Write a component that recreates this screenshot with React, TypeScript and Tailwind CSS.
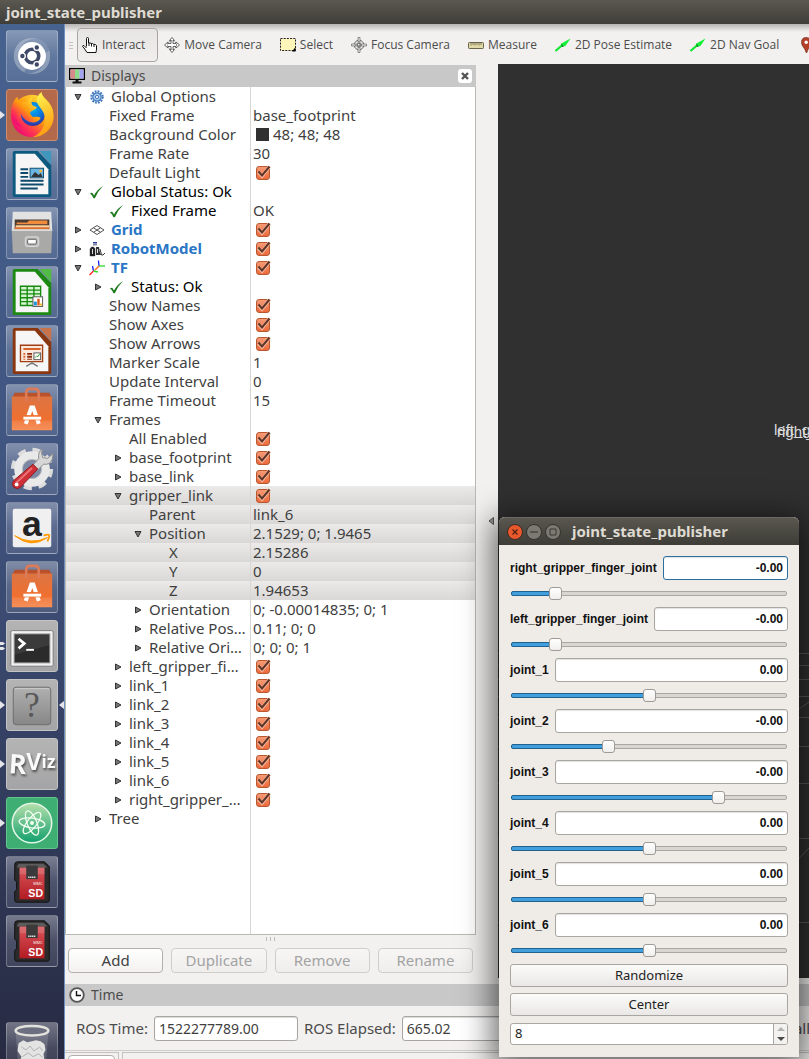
import { useState, type ReactNode } from "react";

/* ---------- launcher icons ---------- */

const UbuntuIcon = () => (
  <svg viewBox="0 0 52 52" className="size-full">
    <circle cx="26" cy="26" r="19" fill="#fff" opacity="0.1" />
    <path d="M8 32C4 16 16 5 30 8c-12 0-18 8-17 20zM44 20c4 16-8 27-22 24 12 0 18-8 17-20zM18 43C4 36 4 20 15 11c-7 10-4 20 6 25z" fill="#fff" opacity="0.22" />
    <circle cx="26" cy="26" r="14.500" fill="#fff" />
    <circle cx="26" cy="26" r="7" fill="none" stroke="#3f4968" strokeWidth="3.800" />
    <g stroke="#fff" strokeWidth="1.400" fill="#3f4968">
      <circle cx="16" cy="26" r="3" />
      <circle cx="31" cy="17.200" r="3" />
      <circle cx="31" cy="34.800" r="3" />
    </g>
  </svg>
);

const FirefoxIcon = () => (
  <svg viewBox="0 0 52 52" className="size-full">
    <defs>
      <linearGradient id="fxBody" x1="0.85" y1="0.1" x2="0.15" y2="0.9">
        <stop offset="0" stopColor="#ffe53b" />
        <stop offset="0.45" stopColor="#ff980e" />
        <stop offset="0.75" stopColor="#ff3750" />
        <stop offset="1" stopColor="#eb0878" />
      </linearGradient>
      <radialGradient id="fxBlue" cx="0.5" cy="0.3" r="0.7">
        <stop offset="0" stopColor="#00b3f4" />
        <stop offset="0.6" stopColor="#0a6fd8" />
        <stop offset="1" stopColor="#3a2f9b" />
      </radialGradient>
      <linearGradient id="fxTail" x1="0.3" y1="0" x2="0.6" y2="1">
        <stop offset="0" stopColor="#fff44f" />
        <stop offset="1" stopColor="#ff980e" />
      </linearGradient>
    </defs>
    <circle cx="26" cy="27" r="22" fill="url(#fxBody)" />
    <circle cx="27" cy="25" r="12.500" fill="url(#fxBlue)" />
    <path d="M4.500 26C3.500 16 8 9 11 7c0 3 1 5 3 6 3-1 5-1 7 0 0-2 3-5 6-6-2 3-2 5-1 8 1 2 4 2 5 3-1 3-6 3-7 6 0 2 2 3 3 4 3 0 5-1 8 1-2 4-7 6-12 4C16 31 12 22 14 17 8 22 9 32 16 39 9 37 5 32 4.500 26z" fill="url(#fxBody)" />
    <path d="M36 2c0 7 13 10 12.500 26C48 40 38 49 27 49c9-4 14-13 12-22-1-7-9-11-8-17 .5-3 2-6 5-8z" fill="url(#fxTail)" />
  </svg>
);

const DocumentShell = ({ main, fold, children }: { main: string; fold: string; children: ReactNode }) => (
  <svg viewBox="0 0 52 52" className="size-full">
    <path d="M8 2h24l14 15v31a2 2 0 0 1-2 2H8a2 2 0 0 1-2-2V4a2 2 0 0 1 2-2z" fill={main} />
    <path d="M34 2h12v14z" fill={fold} />
    <path d="M9 5h20l14 16v26H9z" fill="#f6f6f6" />
    {children}
  </svg>
);

const WriterIcon = () => (
  <DocumentShell main="#0d5a80" fold="#3f97bd">
    <g fill="#0d4a6c">
      <path d="M14 20h8v2h-8zM14 24h8v2h-8zM14 28h8v2h-8zM14 32h24v2H14zM14 36h24v2H14zM14 40h18v2H14z" />
    </g>
    <rect x="24" y="20" width="14" height="10" fill="#6ab6e2" stroke="#0d4a6c" />
    <path d="M25 29l4-5 4 3 2-2 2 4z" fill="#333" />
    <circle cx="35" cy="23" r="1.500" fill="#ffb52e" />
  </DocumentShell>
);

const CalcIcon = () => (
  <DocumentShell main="#1c8a12" fold="#51bb46">
    <path d="M14 20h21v20H14zM14 24h21M14 28h21M14 32h21M14 36h21M21 20v20M28 20v20" fill="#d8f5d3" stroke="#158a0c" strokeWidth="1.400" />
    <rect x="27" y="31" width="10" height="10" fill="#fff" stroke="#555" />
    <path d="M28 36h3v4h-3z" fill="#1893d8" />
    <path d="M31.500 33h2.500v7h-2.500z" fill="#e0571b" />
    <path d="M34 38h2.500v2H34z" fill="#f5c021" />
  </DocumentShell>
);

const ImpressIcon = () => (
  <DocumentShell main="#8a3710" fold="#c8734a">
    <path d="M14 20h23v17H14z" fill="#fbe9df" stroke="#a23f12" strokeWidth="1.400" />
    <path d="M17 23h18v2H17zM17 28h2v2h-2zM17 31h2v2h-2zM17 34h2v1h-2z" fill="#d9642a" />
    <path d="M21 28h5v2h-5zM21 31h5v2h-5zM21 34h5v1h-5z" fill="#8a2b0a" />
    <rect x="28" y="28" width="7" height="7" fill="#fff" stroke="#555" />
    <path d="M29 33l2-2 1 1 2-3" stroke="#2a9b2a" fill="none" />
    <path d="M26 37v2M20 42l5-3h2l5 3" stroke="#777" strokeWidth="1.500" fill="none" />
  </DocumentShell>
);

const FilesIcon = () => (
  <svg viewBox="0 0 52 52" className="size-full">
    <path d="M6 4h40l1 19H5z" fill="#e2e2e2" />
    <path d="M8 12h36v12H8z" fill="#4a3a32" />
    <path d="M10 15h11l2-2h19v4H10z" fill="#ef8c3e" />
    <path d="M9 18h35v4H9z" fill="#f7cf9d" />
    <path d="M8 20h36v3H8z" fill="#e06d2e" />
    <path d="M5 22h42l-1 25H6z" fill="#a9a9a7" />
    <path d="M5 22h42v2H5z" fill="#dcdcdc" />
    <rect x="19" y="30" width="14" height="10" rx="2" fill="#bdbdbd" stroke="#dedede" />
    <rect x="21.500" y="32.500" width="9" height="5" rx="1" fill="#fff" stroke="#555" />
  </svg>
);

const SoftwareIcon = () => (
  <svg viewBox="0 0 52 52" className="size-full">
    <defs>
      <linearGradient id="bag" x1="0" y1="0" x2="0" y2="1">
        <stop offset="0" stopColor="#dc7443" />
        <stop offset="0.700" stopColor="#f07030" />
        <stop offset="1" stopColor="#f58347" />
      </linearGradient>
    </defs>
    <path d="M8 8h36l3 6H5z" fill="#b9512b" />
    <path d="M5 12h42v35H5z" fill="url(#bag)" />
    <path d="M5 37h42v10H5z" fill="#fff" opacity="0.1" />
    <path d="M20 17V8q0-4 4-4h5q4 0 4 4v9" fill="none" stroke="#dd7a58" strokeWidth="2.800" />
    <path d="M19.500 40.500L25.300 23.500h2l5.800 17" stroke="#fff" strokeWidth="4.200" fill="none" />
    <path d="M16 34h21" stroke="#f07030" strokeWidth="5.400" />
    <path d="M17 34.500h18.500" stroke="#fff" strokeWidth="3" />
  </svg>
);

const SettingsIcon = () => (
  <svg viewBox="0 0 52 52" className="size-full">
    <circle cx="26" cy="26" r="19.500" fill="none" stroke="#dcdcdc" strokeWidth="5" strokeDasharray="8.300 7" />
    <circle cx="26" cy="26" r="14" fill="none" stroke="#e9e9e9" strokeWidth="9" />
    <circle cx="26" cy="26" r="10" fill="#7b87a3" stroke="#bbb" />
    <path d="M37 5q-5 3-4 10L26 23l5 5 7-7q7 1 9-5l1-6-6 5-5-1-1-5z" fill="#d6d6d6" stroke="#8a8a8a" />
    <path d="M27 21l5 5-18 19q-3 3-7 0-3-4 0-7z" fill="#cf2f36" stroke="#8c1a20" />
    <path d="M26 25L10 40" stroke="#ea7378" strokeWidth="2" />
    <circle cx="10" cy="42" r="2" fill="#fff" />
  </svg>
);

const AmazonIcon = () => (
  <svg viewBox="0 0 52 52" className="size-full">
    <rect x="6" y="6" width="40" height="40" rx="2" fill="#f0f0f0" />
    <text x="26" y="34" textAnchor="middle" fontFamily="Liberation Sans, sans-serif" fontWeight="700" fontSize="37" fill="#222">a</text>
    <path d="M8 34q17 10 34 2-17 12-34-2z" fill="#ff9900" stroke="#ff9900" />
    <path d="M38 34q6-2 6 0t-2 6" fill="none" stroke="#ff9900" strokeWidth="1.800" />
  </svg>
);

const TerminalIcon = () => (
  <svg viewBox="0 0 52 52" className="size-full">
    <rect x="4" y="10" width="44" height="37" rx="1.500" fill="#f1f1f1" stroke="#7a7a7a" />
    <rect x="7.500" y="13.500" width="37" height="30" fill="#2b2b2b" stroke="#888" />
    <path d="M8 14h36v11L8 35z" fill="#fff" opacity="0.08" />
    <path d="M12 18.500l6 5-6 5" fill="none" stroke="#fff" strokeWidth="2.800" />
    <path d="M20 30h8" stroke="#fff" strokeWidth="2" />
  </svg>
);

const UnknownIcon = () => (
  <svg viewBox="0 0 52 52" className="size-full">
    <defs>
      <linearGradient id="unk" x1="0" y1="0" x2="0" y2="1">
        <stop offset="0" stopColor="#b0b0b0" />
        <stop offset="1" stopColor="#878787" />
      </linearGradient>
    </defs>
    <rect x="6.500" y="7.500" width="39" height="39" rx="3" fill="url(#unk)" stroke="#6c6c6c" />
    <path d="M8 9h36" stroke="#ccc" />
    <text x="26" y="38.500" textAnchor="middle" fontFamily="Liberation Serif, serif" fontSize="37" fill="#595959">?</text>
  </svg>
);

const RvizIcon = () => (
  <svg
    viewBox="0 0 52 52"
    className="size-full drop-shadow-[1px_2px_1px_rgba(70,70,70,0.9)]"
    fontFamily="Open Sans, sans-serif"
    fontWeight="700"
    fill="#fafafa"
  >
    <text x="2" y="36" fontSize="28" transform="rotate(4 12 26)">R</text>
    <text x="20" y="32" fontSize="24">V</text>
    <text x="36" y="30" fontSize="18">iz</text>
  </svg>
);

const AtomIcon = () => (
  <svg viewBox="0 0 52 52" className="size-full">
    <defs>
      <linearGradient id="atom" x1="0" y1="0" x2="0" y2="1">
        <stop offset="0" stopColor="#b5e0ac" />
        <stop offset="1" stopColor="#12a06c" />
      </linearGradient>
    </defs>
    <circle cx="26" cy="26" r="20.500" fill="url(#atom)" stroke="#e2f5e6" strokeWidth="1.600" />
    <g fill="none" stroke="#f4fff4" strokeWidth="1.300">
      <ellipse cx="26" cy="26" rx="5" ry="13.500" transform="rotate(-22 26 26)" />
      <ellipse cx="26" cy="26" rx="5" ry="13.500" transform="rotate(38 26 26)" />
      <ellipse cx="26" cy="26" rx="5" ry="13.500" transform="rotate(98 26 26)" />
    </g>
    <circle cx="26" cy="26" r="2" fill="#f4fff4" />
  </svg>
);

const SdIcon = () => (
  <svg viewBox="0 0 52 52" className="size-full">
    <defs>
      <linearGradient id="sd" x1="0" y1="0" x2="0" y2="1">
        <stop offset="0" stopColor="#d8545a" />
        <stop offset="1" stopColor="#b31b22" />
      </linearGradient>
    </defs>
    <path d="M11 5h28l5 5v35q0 2-2 2H10q-2 0-2-2v-9l2-2v-8l-2-2V8q0-3 3-3z" fill="#2a2a2a" stroke="#111" />
    <path d="M12 7h26l4 4H10z" fill="#5c5c5c" />
    <rect x="13" y="11" width="26" height="33" fill="url(#sd)" />
    <path d="M13 11h26v7H13z" fill="#fff" opacity="0.15" />
    <path d="M20 9h12v14H20z" fill="#3a3a3a" />
    <path d="M22 21h8" stroke="#ddd" strokeWidth="1.500" strokeDasharray="1.500 .5" />
    <text x="37" y="29.500" textAnchor="end" fontFamily="Open Sans, sans-serif" fontSize="4" fill="#fff">MMC</text>
    <text x="37.500" y="42" textAnchor="end" fontFamily="Liberation Sans, sans-serif" fontWeight="700" fontSize="11" fill="#fff">SD</text>
  </svg>
);

const TrashIcon = () => (
  <svg viewBox="0 0 52 52" className="size-full">
    <path d="M9 10h34l-3 40H12z" fill="#fff" opacity="0.15" />
    <ellipse cx="26" cy="8" rx="17" ry="5" fill="#6b6f80" stroke="#e2e2dc" strokeWidth="2.600" />
    <path d="M12 21l5-3 4 2 5-1 4-1 5 1 4 3 1 6-2 4 1 8-2 9H14l-1-9 2-5-4-6z" fill="#e3e3e3" />
    <path d="M15 25l5 3 4-4 4 5 6-4 3 4M16 35l6-4 5 4 6-3 4 4" stroke="#b0b0b0" fill="none" />
  </svg>
);

const glass = "bg-linear-to-b from-white/35 via-white/15 to-white/10 border-white/25";
const steel = "bg-linear-to-b from-[#b4b4b4] to-[#a4a4a6] border-[#c4c4c4]";

type App = { name: string; tile: string; icon: ReactNode; running?: number; focused?: boolean };

const apps: App[] = [
  { name: "Search your computer", tile: glass, icon: <UbuntuIcon /> },
  { name: "Firefox", tile: "bg-[#b4694a] border-[#d08e70]", icon: <FirefoxIcon />, running: 1 },
  { name: "Writer", tile: glass, icon: <WriterIcon /> },
  { name: "Files", tile: glass, icon: <FilesIcon /> },
  { name: "Calc", tile: glass, icon: <CalcIcon /> },
  { name: "Impress", tile: glass, icon: <ImpressIcon /> },
  { name: "Software", tile: glass, icon: <SoftwareIcon /> },
  { name: "Settings", tile: glass, icon: <SettingsIcon /> },
  { name: "Amazon", tile: glass, icon: <AmazonIcon /> },
  { name: "Updates", tile: glass, icon: <SoftwareIcon /> },
  { name: "Terminal", tile: steel, icon: <TerminalIcon />, running: 2 },
  { name: "Joint state publisher", tile: steel, icon: <UnknownIcon />, running: 1, focused: true },
  { name: "RViz", tile: steel, icon: <RvizIcon />, running: 1 },
  { name: "Atom", tile: "bg-[#3eae72] border-[#63c58e]", icon: <AtomIcon />, running: 1 },
  { name: "Card 1", tile: glass, icon: <SdIcon /> },
  { name: "Card 2", tile: glass, icon: <SdIcon /> },
];

function LauncherItem({ app }: { app: App }) {
  return (
    <li className="flex h-13 shrink-0 items-center">
      <span className="flex w-1.5 shrink-0 flex-col">
        {app.running === 1 && (
          <svg viewBox="0 0 5 8" className="h-2 w-[5px]"><path d="M0 0l5 4-5 4z" fill="#e6e6ea" /></svg>
        )}
        {app.running === 2 && (
          <svg viewBox="0 0 5 8" className="h-2 w-[5px]"><path d="M0 0h3l2 1.500-2 1.500H0zM0 5h3l2 1.500-2 1.500H0z" fill="#e6e6ea" /></svg>
        )}
      </span>
      <button type="button" aria-label={app.name} className={`size-13 shrink-0 rounded-[3px] border ${app.tile}`}>
        {app.icon}
      </button>
      {app.focused && (
        <svg viewBox="0 0 5 8" className="ml-px h-2 w-[5px] shrink-0"><path d="M5 0L0 4l5 4z" fill="#e6e6ea" /></svg>
      )}
    </li>
  );
}

function Launcher() {
  return (
    <nav aria-label="Launcher" className="w-[65px] shrink-0 overflow-hidden border-r border-[#6f8fbf] bg-linear-to-b from-[#46628f] via-[#40547f] via-45% to-[#272a42]">
      <ul className="flex flex-col gap-[7px] pt-1.5">
        {apps.map((a) => <LauncherItem key={a.name} app={a} />)}
        <li className="h-[41px]" aria-hidden="true" />
        <LauncherItem app={{ name: "Trash", tile: glass, icon: <TrashIcon /> }} />
      </ul>
    </nav>
  );
}

/* ---------- toolbar ---------- */

const HandIcon = () => (
  <svg viewBox="0 0 16 16" className="size-4 shrink-0">
    <path d="M4.500 9.500V1.500q0-1 1-1t1 1V6q2-.6 2.500.6 2-.6 2.500.7 2-.3 3 1.200V12q0 1-.5 3.500h-9L2 11 .6 9.500q0-1.300 1.400-1L4.500 11" fill="#fff" stroke="#111" />
    <path d="M7 6v3M9.500 7v2.500M12 7.500V10" stroke="#111" fill="none" />
  </svg>
);
const MoveIcon = () => (
  <svg viewBox="0 0 16 16" className="size-4 shrink-0" fill="#fff" stroke="#555" strokeWidth="0.900">
    <path d="M8 .5l2.500 3H9v3h3V5l3.500 3-3.500 3V9.500H9v3h1.500L8 15.500l-2.500-3H7v-3H4V11L.5 8 4 5v1.500h3v-3H5.500z" />
    <ellipse cx="8" cy="8" rx="4.500" ry="4.500" fill="none" strokeDasharray="1.200 1.200" />
  </svg>
);
const SelectIcon = () => (
  <svg viewBox="0 0 16 14" className="h-3.5 w-4 shrink-0">
    <rect x="0.500" y="0.500" width="15" height="12" fill="#fdf6b8" stroke="#222" strokeDasharray="2 1.200" />
    <path d="M15.500 9v4.500H12z" fill="#000" />
  </svg>
);
const FocusIcon = () => (
  <svg viewBox="0 0 16 16" className="size-4 shrink-0" fill="none" stroke="#666">
    <circle cx="8" cy="8" r="4.800" />
    <circle cx="8" cy="8" r="2" />
    <path d="M7 .5h2V6H7zM7 10h2v5.500H7zM.5 7H6v2H.5zM10 7h5.500v2H10z" fill="#e8e8e8" strokeWidth="0.700" />
    <path d="M8 4v8M4 8h8" strokeDasharray="1 1" />
  </svg>
);
const MeasureIcon = () => (
  <svg viewBox="0 0 16 7" className="h-[7px] w-4 shrink-0">
    <rect x="0.500" y="0.500" width="15" height="6" rx="0.800" fill="#e2d9a8" stroke="#6b6449" />
    <path d="M3 1v2.500M5 1v2M7 1v2.500M9 1v2M11 1v2.500M13 1v2" stroke="#6b6449" strokeWidth="0.800" />
  </svg>
);
const ArrowIcon = () => (
  <svg viewBox="0 0 16 14" className="h-3.5 w-4 shrink-0">
    <path d="M.5 13L8 6.500" stroke="#12e634" strokeWidth="2.200" />
    <path d="M5.500 6L15.500.5 10 8.500z" fill="#12f034" />
    <path d="M6 5.500l3 3-2 .5z" fill="#0a7a1c" />
  </svg>
);
const PinIcon = () => (
  <svg viewBox="0 0 16 16" className="size-4 shrink-0">
    <path d="M5 .5q5 0 5 5c0 4-3 5-4 10H5C4 10.500.5 9.500.5 5.500q0-5 4.500-5z" fill="#b4402a" stroke="#6e2415" strokeWidth="0.600" />
    <circle cx="5.200" cy="5.200" r="1.700" fill="#fff" />
  </svg>
);

const tools: { label: string; icon: ReactNode }[] = [
  { label: "Move Camera", icon: <MoveIcon /> },
  { label: "Select", icon: <SelectIcon /> },
  { label: "Focus Camera", icon: <FocusIcon /> },
  { label: "Measure", icon: <MeasureIcon /> },
  { label: "2D Pose Estimate", icon: <ArrowIcon /> },
  { label: "2D Nav Goal", icon: <ArrowIcon /> },
];

function Toolbar() {
  return (
    <div role="toolbar" className="flex h-10 shrink-0 items-center overflow-hidden bg-linear-to-b from-[#b5b4b2] via-[#f2f1f0] via-20% to-[#f2f1f0] pt-0.5 pl-1 font-['Open_Sans',sans-serif] text-xs text-[#4c4c4c]">
      <span className="mr-1 flex w-1 shrink-0 flex-col gap-0.5" aria-hidden="true">
        <i className="h-px bg-[#c4c2bf]" /><i className="h-px bg-[#c4c2bf]" /><i className="h-px bg-[#c4c2bf]" />
      </span>
      <button type="button" aria-pressed="true" className="flex h-[34px] shrink-0 items-center gap-1 rounded-[4px] border border-[#a9a6a2] bg-linear-to-b from-[#e6e5e4] to-[#f0efee] pr-3 pl-1">
        <HandIcon />Interact
      </button>
      {tools.map((t) => (
        <button key={t.label} type="button" className="flex h-[34px] shrink-0 items-center gap-1 pr-3 pl-1.5 whitespace-nowrap">
          {t.icon}{t.label}
        </button>
      ))}
      <button type="button" aria-label="Publish Point" className="flex h-[34px] shrink-0 items-center pl-2.5">
        <PinIcon />
      </button>
    </div>
  );
}

/* ---------- displays tree ---------- */

const MonitorIcon = () => (
  <svg viewBox="0 0 16 16" className="size-4 shrink-0">
    <rect x="0.700" y="0.700" width="14.600" height="10.600" fill="#ddd" stroke="#000" strokeWidth="1.400" />
    <path d="M1.400 1.400H6v9.200H1.400z" fill="#d98b8b" /><path d="M6 1.400h4.500v9.200H6z" fill="#8ddc8d" /><path d="M10.500 1.400h4.100v9.200h-4.100z" fill="#a3a3ef" />
    <path d="M6.500 11h3v2.500h-3zM3.500 13.500h9v2h-9z" fill="#111" />
  </svg>
);
const ClockIcon = () => (
  <svg viewBox="0 0 16 16" className="size-4 shrink-0">
    <circle cx="8" cy="8" r="6.800" fill="#fff" stroke="#555" strokeWidth="1.800" />
    <path d="M7.500 4v4.500H12" fill="none" stroke="#111" strokeWidth="1.400" />
  </svg>
);
const GearIcon = () => (
  <svg viewBox="0 0 16 16" className="size-4 shrink-0">
    <circle cx="8" cy="8" r="5.700" fill="none" stroke="#3f78bd" strokeWidth="2" strokeDasharray="1.800 1.180" />
    <circle cx="8" cy="8" r="4.200" fill="#a9c8ea" stroke="#3f78bd" strokeWidth="1.200" />
    <circle cx="8" cy="8" r="1.600" fill="#fff" stroke="#3f78bd" />
  </svg>
);
const OkIcon = () => (
  <svg viewBox="0 0 16 16" className="size-4 shrink-0">
    <path d="M1 9.500q1.500-1.200 2.700-.2L5 11.500Q8 5.500 14 2 9 7 6 14q-1 .6-1.700 0Q3.500 11 1 9.500z" fill="#1f7a1f" />
  </svg>
);
const GridIcon = () => (
  <svg viewBox="0 0 16 16" className="size-4 shrink-0" fill="none" stroke="#555">
    <path d="M8 3.500L15 8l-7 4.500L1 8zM4.500 5.800l7 4.500M11.500 5.800l-7 4.500" />
  </svg>
);
const RobotIcon = () => (
  <svg viewBox="0 0 16 16" className="size-4 shrink-0">
    <path d="M4 1h4v1.500H4z" fill="#2a3a9a" /><path d="M4 3h4v1.500H4z" fill="#889" />
    <path d="M1 8l1.500-2h2L6 7.500V15H1zM2.500 9v4" fill="#222" stroke="#222" strokeWidth="0.400" />
    <path d="M7 6h3l.5 4 1.500 4H7z" fill="#333" />
    <path d="M3.500 8v5M8.500 8v4" stroke="#ddd" />
    <path d="M11 8l1.500 6h1.500l2-2" fill="none" stroke="#333" />
  </svg>
);
const TfIcon = () => (
  <svg viewBox="0 0 16 16" className="size-4 shrink-0" fill="none" strokeWidth="1.300">
    <path d="M10 6L9.500.5" stroke="#1c1cff" /><path d="M10 6h6" stroke="#27dd27" /><path d="M10 6l-4 4" stroke="#ff1a1a" />
    <path d="M4.500 11L3.500 6" stroke="#1c1cff" /><path d="M4.500 11l4.500 1" stroke="#27dd27" /><path d="M4.500 11L.5 15" stroke="#ff1a1a" />
    <path d="M10 6l-5.500 5" stroke="#e6e020" strokeWidth="0.700" />
  </svg>
);

type Tone = "normal" | "black" | "link";
type Row = {
  level: 0 | 1 | 2 | 3 | 4;
  name: string;
  open?: boolean;
  icon?: ReactNode;
  tone?: Tone;
  value?: string;
  check?: boolean;
  swatch?: boolean;
  selected?: boolean;
};

const rows: Row[] = [
  { level: 0, name: "Global Options", open: true, icon: <GearIcon /> },
  { level: 1, name: "Fixed Frame", value: "base_footprint" },
  { level: 1, name: "Background Color", value: "48; 48; 48", swatch: true },
  { level: 1, name: "Frame Rate", value: "30" },
  { level: 1, name: "Default Light", check: true },
  { level: 0, name: "Global Status: Ok", open: true, icon: <OkIcon />, tone: "black" },
  { level: 1, name: "Fixed Frame", icon: <OkIcon />, tone: "black", value: "OK" },
  { level: 0, name: "Grid", open: false, icon: <GridIcon />, tone: "link", check: true },
  { level: 0, name: "RobotModel", open: false, icon: <RobotIcon />, tone: "link", check: true },
  { level: 0, name: "TF", open: true, icon: <TfIcon />, tone: "link", check: true },
  { level: 1, name: "Status: Ok", open: false, icon: <OkIcon />, tone: "black" },
  { level: 1, name: "Show Names", check: true },
  { level: 1, name: "Show Axes", check: true },
  { level: 1, name: "Show Arrows", check: true },
  { level: 1, name: "Marker Scale", value: "1" },
  { level: 1, name: "Update Interval", value: "0" },
  { level: 1, name: "Frame Timeout", value: "15" },
  { level: 1, name: "Frames", open: true },
  { level: 2, name: "All Enabled", check: true },
  { level: 2, name: "base_footprint", open: false, check: true },
  { level: 2, name: "base_link", open: false, check: true },
  { level: 2, name: "gripper_link", open: true, check: true, selected: true },
  { level: 3, name: "Parent", value: "link_6", selected: true },
  { level: 3, name: "Position", open: true, value: "2.1529; 0; 1.9465", selected: true },
  { level: 4, name: "X", value: "2.15286", selected: true },
  { level: 4, name: "Y", value: "0", selected: true },
  { level: 4, name: "Z", value: "1.94653", selected: true },
  { level: 3, name: "Orientation", open: false, value: "0; -0.00014835; 0; 1" },
  { level: 3, name: "Relative Pos…", open: false, value: "0.11; 0; 0" },
  { level: 3, name: "Relative Ori…", open: false, value: "0; 0; 0; 1" },
  { level: 2, name: "left_gripper_fi…", open: false, check: true },
  { level: 2, name: "link_1", open: false, check: true },
  { level: 2, name: "link_2", open: false, check: true },
  { level: 2, name: "link_3", open: false, check: true },
  { level: 2, name: "link_4", open: false, check: true },
  { level: 2, name: "link_5", open: false, check: true },
  { level: 2, name: "link_6", open: false, check: true },
  { level: 2, name: "right_gripper_…", open: false, check: true },
  { level: 1, name: "Tree", open: false },
];

const indents = ["pl-0", "pl-5", "pl-10", "pl-15", "pl-20"];
const tones: Record<Tone, string> = {
  normal: "text-[#3f3f3f]",
  black: "text-black",
  link: "font-bold text-[#2a76c6]",
};

function Checkbox({ label }: { label: string }) {
  return (
    <span className="grid size-[17px] place-items-center">
      <input
        type="checkbox"
        defaultChecked
        aria-label={label}
        className="peer col-start-1 row-start-1 size-3.5 appearance-none rounded-[3px] border border-[#a9a6a2] bg-white checked:border-[#b9572f] checked:bg-linear-to-b checked:from-[#f69a75] checked:to-[#ec6a3c]"
      />
      <svg viewBox="0 0 17 17" className="pointer-events-none invisible col-start-1 row-start-1 size-[17px] peer-checked:visible">
        <path d="M4.500 8l3.500 4L15.500 2.500" fill="none" stroke="#f7b89e" strokeWidth="3.600" />
        <path d="M4.500 7.500l3.500 4L15.500 2.500" fill="none" stroke="#5d3526" strokeWidth="2" />
      </svg>
    </span>
  );
}

function TreeRow({ row }: { row: Row }) {
  const bg = row.selected ? "bg-linear-to-b from-[#ebeae9] to-[#d9d8d6]" : "";
  return (
    <tr className={`h-[19px] ${bg}`}>
      <td className="border-r border-[#d8d6d3] p-0">
        <div className={`flex h-[19px] items-center overflow-hidden whitespace-nowrap ${indents[row.level]}`}>
          <span className="flex w-[23px] shrink-0 justify-center">
            {row.open !== undefined && (
              <svg viewBox="0 0 8 8" className="size-2" fill="#777" stroke="#333">
                {row.open ? <path d="M1 1.500h6L4 7z" /> : <path d="M1.500 1v6L7 4z" />}
              </svg>
            )}
          </span>
          {row.icon && <span className="mr-1.5 shrink-0">{row.icon}</span>}
          <span className={tones[row.tone ?? "normal"]}>{row.name}</span>
        </div>
      </td>
      <td className="p-0">
        <div className="flex h-[19px] items-center pl-0.5 whitespace-nowrap text-[#3f3f3f]">
          {row.swatch && <span className="mr-1 ml-[3px] size-[13px] bg-[#303030]" />}
          {row.check ? <span className="pl-px"><Checkbox label={row.name} /></span> : row.value}
        </div>
      </td>
    </tr>
  );
}

function PanelTitle({ icon, title, closable }: { icon: ReactNode; title: string; closable?: boolean }) {
  return (
    <div className="flex h-[22px] shrink-0 items-center gap-1.5 bg-[#c8c8c8] px-1 text-sm text-[#4c4c4c]">
      {icon}
      <h2 className="flex-1">{title}</h2>
      {closable && (
        <button type="button" aria-label={`Close ${title}`} className="grid size-3.5 place-items-center rounded-[3px] bg-white">
          <svg viewBox="0 0 8 8" className="size-2"><path d="M1 1l6 6M7 1L1 7" stroke="#555" strokeWidth="2.400" /></svg>
        </button>
      )}
    </div>
  );
}

function DisplaysPanel() {
  return (
    <section className="flex w-[411px] shrink-0 flex-col pt-px">
      <PanelTitle icon={<MonitorIcon />} title="Displays" closable />
      <div className="flex flex-1 flex-col overflow-hidden border border-t-0 border-[#bab8b3] bg-white">
        <table className="w-full table-fixed border-separate border-spacing-0 text-[15px] leading-[19px]">
          <colgroup><col className="w-[185px]" /><col /></colgroup>
          <tbody>{rows.map((r, i) => <TreeRow key={i} row={r} />)}</tbody>
        </table>
        <div className="w-[185px] flex-1 border-r border-[#d8d6d3]" />
      </div>
      <div className="flex h-[13px] shrink-0 justify-center gap-[3px] pt-0.5" aria-hidden="true">
        <i className="h-1 w-px bg-[#bbb]" /><i className="h-1 w-px bg-[#bbb]" /><i className="h-1 w-px bg-[#bbb]" />
      </div>
      <div className="mb-[5px] flex shrink-0 gap-2 pr-[3px] pl-[3px] text-[15px] leading-[19px]">
        <button type="button" className="h-[25px] flex-1 rounded-[4px] border border-[#b3b0ac] bg-linear-to-b from-white to-[#f3f2f1] text-[#3f3f3f]">Add</button>
        {["Duplicate", "Remove", "Rename"].map((b) => (
          <button key={b} type="button" disabled className="h-[25px] flex-1 rounded-[4px] border border-[#d0cecb] bg-linear-to-b from-[#f7f6f5] to-[#efeeed] text-[#a3a3a3]">{b}</button>
        ))}
      </div>
    </section>
  );
}

/* ---------- 3D view and time panel ---------- */

function RenderView() {
  return (
    <div className="relative flex-1 overflow-hidden bg-[#303030]">
      <svg viewBox="0 0 311 914" preserveAspectRatio="xMinYMin slice" className="size-full" stroke="#585858" fill="none">
        <path d="M0 589.500h311M0 601.500h311M0 615.500h311M0 632.500h311M0 653.500h311M0 682.500h311M0 719.500h311M0 774.500h311M0 858.500h311M290 653l21-15M290 806l21-22" />
      </svg>
      <span className="absolute top-[356px] left-[276px] font-['Liberation_Sans',sans-serif] text-[15px] leading-5 whitespace-nowrap text-[#dcdcdc]">left_gripper_finger_link</span>
      <span className="absolute top-[358px] left-[279px] font-['Liberation_Sans',sans-serif] text-[15px] leading-5 whitespace-nowrap text-[#dcdcdc]">right_gripper_finger_link</span>
    </div>
  );
}

const times = [
  { label: "ROS Time:", value: "1522277789.00" },
  { label: "ROS Elapsed:", value: "665.02" },
  { label: "Wall Time:", value: "1522277789.04" },
  { label: "Wall Elapsed:", value: "664.98" },
];

function TimePanel() {
  return (
    <section className="shrink-0 pt-1.5">
      <PanelTitle icon={<ClockIcon />} title="Time" />
      <div className="flex h-11 items-center gap-1.5 overflow-hidden pl-[11px] text-[15px] text-[#4c4c4c]">
        {times.map((t) => (
          <label key={t.label} className="flex shrink-0 items-center gap-1.5 whitespace-nowrap">
            {t.label}
            <input readOnly value={t.value} className="h-[25px] w-36 rounded-[3px] border border-[#a9a6a2] bg-white px-1 text-sm text-[#3f3f3f] shadow-[inset_0_1px_1px_rgba(0,0,0,0.15)]" />
          </label>
        ))}
      </div>
      <div className="flex h-[9px] gap-[3px] overflow-hidden border-t border-[#cfcdca] pt-px">
        <div className="w-[54px] border-t border-r border-[#c4c2be] px-[3px] pt-0.5">
          <div className="h-5 rounded-[4px] border border-[#b3b0ac] bg-white" />
        </div>
        <div className="flex-1 border-t border-l border-[#c4c2be]" />
      </div>
    </section>
  );
}

/* ---------- joint_state_publisher window ---------- */

const joints = [
  { name: "right_gripper_finger_joint", value: "-0.00", pos: 144, focused: true },
  { name: "left_gripper_finger_joint", value: "-0.00", pos: 144 },
  { name: "joint_1", value: "0.00", pos: 500 },
  { name: "joint_2", value: "-0.00", pos: 345 },
  { name: "joint_3", value: "-0.00", pos: 763 },
  { name: "joint_4", value: "0.00", pos: 500 },
  { name: "joint_5", value: "0.00", pos: 500 },
  { name: "joint_6", value: "0.00", pos: 500 },
];

function Joint({ name, value, pos, focused }: { name: string; value: string; pos: number; focused?: boolean }) {
  const [p, setP] = useState(pos);
  return (
    <div className="flex flex-col gap-[7px]">
      <label className="flex items-center gap-1.5 font-['Liberation_Sans',sans-serif] text-xs font-bold text-[#111]">
        {name}
        <input
          readOnly
          value={value}
          className={`h-6 min-w-0 flex-1 rounded-[3px] border bg-white px-1 text-right shadow-[inset_0_1px_1px_rgba(0,0,0,0.12)] ${focused ? "border-[#2a6f9f]" : "border-[#a9a6a2]"}`}
        />
      </label>
      <div className="mx-px grid h-[13px] items-center">
        <div className="col-start-1 row-start-1 h-[5px] rounded-[2px] border border-[#aaa7a3] bg-[#d9d6d2]">
          <div className="-mx-px -mt-px h-[5px] rounded-[2px] border border-[#22628f] bg-[#419fdd]" style={{ width: `${p / 10}%` }} />
        </div>
        <input
          type="range"
          min={0}
          max={1000}
          value={p}
          onChange={(e) => setP(Number(e.target.value))}
          aria-label={`${name} position`}
          className="z-10 col-start-1 row-start-1 m-0 h-[13px] w-full appearance-none bg-transparent [&::-webkit-slider-thumb]:size-[13px] [&::-webkit-slider-thumb]:appearance-none [&::-webkit-slider-thumb]:rounded-[3px] [&::-webkit-slider-thumb]:border [&::-webkit-slider-thumb]:border-[#9e9b97] [&::-webkit-slider-thumb]:bg-linear-to-b [&::-webkit-slider-thumb]:from-white [&::-webkit-slider-thumb]:to-[#f0efed]"
        />
      </div>
    </div>
  );
}

function PublisherWindow() {
  const bigButton = "h-[23px] rounded-[3px] border border-[#a9a6a2] bg-linear-to-b from-[#fbfbfa] to-[#eae8e6]";
  return (
    <div role="dialog" aria-labelledby="publisher-title" className="absolute top-[517px] left-[499px] z-20 w-[300px] rounded-t-[6px] bg-[#efebe7] shadow-[0_6px_32px_6px_rgba(0,0,0,0.6)]">
      <div className="flex h-7 items-center gap-[3px] rounded-t-[6px] border-t border-[#6b6961] bg-linear-to-b from-[#59574f] to-[#3d3c37] pl-2">
        <button type="button" aria-label="Close" className="grid size-4 place-items-center rounded-full border border-[#3a2a22] bg-[#e9582c]">
          <svg viewBox="0 0 8 8" className="size-2"><path d="M1.500 1.500l5 5M6.500 1.500l-5 5" stroke="#4a2113" strokeWidth="1.200" /></svg>
        </button>
        <button type="button" aria-label="Minimize" className="grid size-4 place-items-center rounded-full border border-[#33322e] bg-[#7b7972]">
          <svg viewBox="0 0 8 8" className="size-2"><path d="M0 4h8" stroke="#3a3935" strokeWidth="1.200" /></svg>
        </button>
        <button type="button" aria-label="Maximize" className="grid size-4 place-items-center rounded-full border border-[#33322e] bg-[#7b7972]">
          <svg viewBox="0 0 8 8" className="size-2"><path d="M1 1h6v6H1z" stroke="#3a3935" fill="none" /></svg>
        </button>
        <h1 id="publisher-title" className="ml-2 text-[15px] font-bold text-[#dfdbd2]">joint_state_publisher</h1>
      </div>
      <div className="flex flex-col gap-[7px] px-[11px] pt-[11px] pb-3 font-['Noto_Sans',sans-serif] text-[13px] text-[#222]">
        {joints.map((j) => <Joint key={j.name} {...j} />)}
        <div className="flex flex-col gap-1.5">
          <button type="button" className={bigButton}>Randomize</button>
          <button type="button" className={bigButton}>Center</button>
        </div>
        <div className="flex h-[22px] overflow-hidden rounded-[3px] border border-[#a9a6a2] bg-white">
          <input aria-label="Joint count" defaultValue="8" className="min-w-0 flex-1 bg-transparent px-1" />
          <div className="flex w-3.5 flex-col border-l border-[#a9a6a2] bg-[#f3f2f0]">
            <button type="button" aria-label="Increase" className="grid flex-1 place-items-center"><svg viewBox="0 0 8 4" className="h-1 w-2"><path d="M0 4l4-4 4 4z" fill="#b5b3b0" /></svg></button>
            <button type="button" aria-label="Decrease" className="grid flex-1 place-items-center"><svg viewBox="0 0 8 4" className="h-1 w-2"><path d="M0 0l4 4 4-4z" fill="#4a4a4a" /></svg></button>
          </div>
        </div>
      </div>
    </div>
  );
}

export default function App() {
  return (
    <div className="relative flex h-screen w-full flex-col overflow-hidden bg-[#f2f1f0] font-['Noto_Sans','Open_Sans',sans-serif]">
      <header className="flex h-6 shrink-0 items-center bg-linear-to-b from-[#5a5850] to-[#3f3e39] pl-1.5 text-[15px] font-bold text-[#dfdbd2]">joint_state_publisher</header>
      <div className="flex min-h-0 flex-1">
        <Launcher />
        <main className="flex min-w-0 flex-1 flex-col">
          <Toolbar />
          <div className="flex min-h-0 flex-1">
            <DisplaysPanel />
            <div className="flex w-[22px] shrink-0 items-center justify-end pr-1">
              <svg viewBox="0 0 6 8" className="h-2 w-1.5"><path d="M5.500 .5L1 4l4.500 3.500z" fill="#999" stroke="#555" /></svg>
            </div>
            <RenderView />
          </div>
          <TimePanel />
        </main>
      </div>
      <PublisherWindow />
    </div>
  );
}
